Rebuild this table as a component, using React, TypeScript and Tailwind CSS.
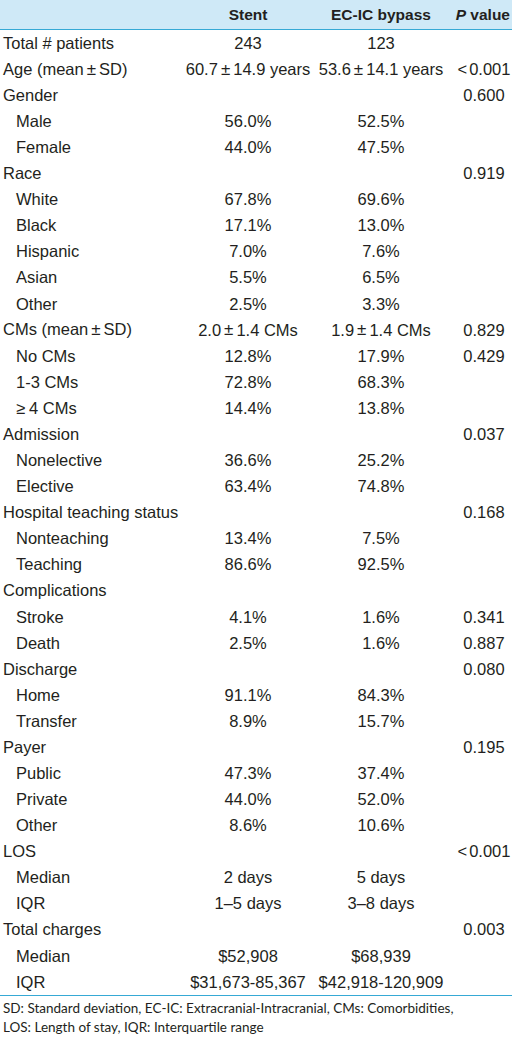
import type { ReactNode } from "react";

type Row = { label: string; sub?: boolean; stent?: string; ecic?: string; p?: string };

const rows: Row[] = [
  { label: "Total # patients", stent: "243", ecic: "123" },
  { label: "Age (mean\u00b1SD)", stent: "60.7\u00b114.9 years", ecic: "53.6\u00b114.1 years", p: "<0.001" },
  { label: "Gender", p: "0.600" },
  { label: "Male", sub: true, stent: "56.0%", ecic: "52.5%" },
  { label: "Female", sub: true, stent: "44.0%", ecic: "47.5%" },
  { label: "Race", p: "0.919" },
  { label: "White", sub: true, stent: "67.8%", ecic: "69.6%" },
  { label: "Black", sub: true, stent: "17.1%", ecic: "13.0%" },
  { label: "Hispanic", sub: true, stent: "7.0%", ecic: "7.6%" },
  { label: "Asian", sub: true, stent: "5.5%", ecic: "6.5%" },
  { label: "Other", sub: true, stent: "2.5%", ecic: "3.3%" },
  { label: "CMs (mean\u00b1SD)", stent: "2.0\u00b11.4 CMs", ecic: "1.9\u00b11.4 CMs", p: "0.829" },
  { label: "No CMs", sub: true, stent: "12.8%", ecic: "17.9%", p: "0.429" },
  { label: "1-3 CMs", sub: true, stent: "72.8%", ecic: "68.3%" },
  { label: "\u22654 CMs", sub: true, stent: "14.4%", ecic: "13.8%" },
  { label: "Admission", p: "0.037" },
  { label: "Nonelective", sub: true, stent: "36.6%", ecic: "25.2%" },
  { label: "Elective", sub: true, stent: "63.4%", ecic: "74.8%" },
  { label: "Hospital teaching status", p: "0.168" },
  { label: "Nonteaching", sub: true, stent: "13.4%", ecic: "7.5%" },
  { label: "Teaching", sub: true, stent: "86.6%", ecic: "92.5%" },
  { label: "Complications" },
  { label: "Stroke", sub: true, stent: "4.1%", ecic: "1.6%", p: "0.341" },
  { label: "Death", sub: true, stent: "2.5%", ecic: "1.6%", p: "0.887" },
  { label: "Discharge", p: "0.080" },
  { label: "Home", sub: true, stent: "91.1%", ecic: "84.3%" },
  { label: "Transfer", sub: true, stent: "8.9%", ecic: "15.7%" },
  { label: "Payer", p: "0.195" },
  { label: "Public", sub: true, stent: "47.3%", ecic: "37.4%" },
  { label: "Private", sub: true, stent: "44.0%", ecic: "52.0%" },
  { label: "Other", sub: true, stent: "8.6%", ecic: "10.6%" },
  { label: "LOS", p: "<0.001" },
  { label: "Median", sub: true, stent: "2 days", ecic: "5 days" },
  { label: "IQR", sub: true, stent: "1\u20135 days", ecic: "3\u20138 days" },
  { label: "Total charges", p: "0.003" },
  { label: "Median", sub: true, stent: "$52,908", ecic: "$68,939" },
  { label: "IQR", sub: true, stent: "$31,673-85,367", ecic: "$42,918-120,909" },
];

// math signs in the source are set with extra room around them
function fmt(text?: string): ReactNode {
  if (!text) return null;
  return text.split(/([\u00b1\u2265<])/).map((part, i) => {
    if (part === "\u00b1") return <span key={i} className="mx-[3px] text-[17px]">{part}</span>;
    if (part === "\u2265") return <span key={i} className="mr-[4px]">{part}</span>;
    if (part === "<") return <span key={i} className="mr-[2px]">{part}</span>;
    return part;
  });
}

export default function App() {
  return (
    <div className="w-[519px] h-[1042px] bg-white text-[#231f20] overflow-hidden">
      <div className="w-[512px] font-['Liberation_Sans',Arial,sans-serif]">
        <div className="grid grid-cols-[190px_116px_150px_56px] h-[30px] items-center bg-[#cfe9f7] border-b border-[#36a9d5] font-bold text-[15.5px]">
          <div />
          <div className="text-center whitespace-nowrap">Stent</div>
          <div className="text-center whitespace-nowrap">EC-IC bypass</div>
          <div className="flex justify-end whitespace-nowrap pr-[2px]">
            <span>
              <span className="italic">P</span> value
            </span>
          </div>
        </div>
        <div className="border-b border-[#36a9d5] text-[16.5px]">
          {rows.map((r, i) => (
            <div key={i} className="grid grid-cols-[190px_116px_150px_56px] h-[26.08px] items-center leading-none">
              <div className={r.sub ? "pl-[16px] whitespace-nowrap" : "pl-[3px] whitespace-nowrap"}>{fmt(r.label)}</div>
              <div className="flex justify-center items-center whitespace-nowrap">{fmt(r.stent)}</div>
              <div className="flex justify-center items-center whitespace-nowrap">{fmt(r.ecic)}</div>
              <div className="flex justify-center items-center whitespace-nowrap">{fmt(r.p)}</div>
            </div>
          ))}
        </div>
      </div>
      <div className="pl-[3px] pt-[3px] font-['Lato',sans-serif] text-[13.5px] leading-[19px]">
        <div>SD: Standard deviation, EC-IC: Extracranial-Intracranial, CMs: Comorbidities,</div>
        <div>LOS: Length of stay, IQR: Interquartile range</div>
      </div>
    </div>
  );
}
